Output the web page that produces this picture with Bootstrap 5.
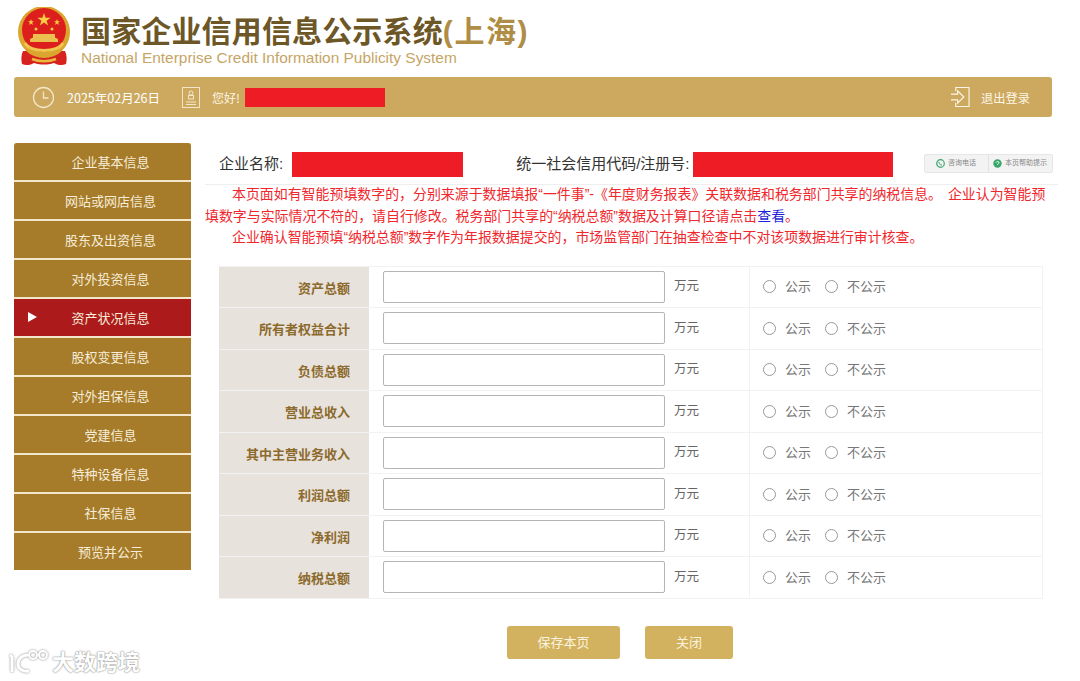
<!DOCTYPE html>
<html lang="zh">
<head>
<meta charset="utf-8">
<title>国家企业信用信息公示系统</title>
<link href="https://cdn.jsdelivr.net/npm/bootstrap@5.3.0/dist/css/bootstrap.min.css" rel="stylesheet">
<style>
html,body{height:681px;overflow:hidden;background:#fff}
body{font-family:"Liberation Sans","Noto Sans CJK SC",sans-serif;color:#444;position:relative}
.site-head{height:77px;padding:7px 0 0 17px;gap:10px}
.head-title{font-family:"Liberation Sans","Noto Sans CJK SC",sans-serif;font-size:30px;font-weight:700;line-height:32px;color:#6d5726;margin-top:9px;letter-spacing:.15px;white-space:nowrap}
.head-title span{color:#b08d46;font-weight:700;letter-spacing:1.600px}
.head-en{font-size:15.45px;line-height:16px;color:#c6a565;margin-top:2px;white-space:nowrap}
.top-bar{margin:0 28px 0 14px;height:40px;background:#cca95f;border-radius:3px;color:#fff;padding:0 22px 0 18px;font-family:"Noto Sans CJK SC",sans-serif}
.date-txt{font-size:12.5px;margin:2px 22px 0 12px}
.hello-txt{font-size:12px;margin:2px 0 0 12px;color:#fdf6e6}
.mask-a{width:140px;height:19px;background:#ee1c25;margin-left:5px}
.logout{font-size:12.25px;gap:11px;color:#fdf6e6}
.logout span{margin-top:2px}
.main-area{margin-top:26px;padding-left:14px}
.side-nav{width:177px;flex:none;gap:2px;background:#f3e7cb}
.side-item{height:37px;background:#a67c2a;color:#f6ecd8;font-family:"Noto Sans CJK SC",sans-serif;font-size:13px;line-height:37px;text-align:center;padding-left:16px;position:relative;text-decoration:none}
.side-item:first-child{border-radius:3px 3px 0 0}
.side-item.on{background:#ad1a1c}
.side-item.on::before{content:"";position:absolute;left:14px;top:13px;border-left:9px solid #fff;border-top:5px solid transparent;border-bottom:5px solid transparent}
.content-col{width:853px;margin-left:14px;font-family:"Liberation Sans","Noto Sans CJK SC",sans-serif}
.name-row{height:42px;padding:2px 5px 0 14px;border-bottom:1px solid #eee;font-size:15px;color:#333;white-space:nowrap}
.mask-b{height:25px;background:#ee1c25}
.name-mask{width:171px;margin-left:9px}
.code-lab{margin-left:53px}
.code-mask{width:200px;margin-left:3px}
.help-btns{border:1px solid #e6e6e6;background:#f3f3f3;border-radius:2px;height:19px;font-size:7px;color:#888;margin-left:31px;margin-bottom:2px}
.help-btns>div{height:17px;gap:3px}
.help-btns>div:first-child{width:64px;border-right:1px solid #e2e2e2}
.help-btns>div:last-child{width:63px}
.notice{font-size:13.93px;line-height:21.5px;color:#f0272d;margin:-1px 0 0;padding-top:0;white-space:nowrap;word-spacing:2px}
.notice p{margin:0}
.notice .lead-in{text-indent:27px}
.notice a{color:#1f1fd8;text-decoration:none}
.form-grid{margin:17px 15px 0 14px;border:1px solid #f2f2f2;border-left:0;border-bottom:0;width:824px}
.form-line{height:41.5px;border-bottom:1px solid #f2f2f2}
.form-lab{width:150px;flex:none;height:100%;background:#e8e2dc;text-align:right;padding-right:19px;font-size:13px;font-weight:700;color:#8c6a2c;line-height:43.500px}
.form-val{width:381px;flex:none;height:100%;padding-left:14px;border-right:1px solid #f2f2f2;font-size:12.5px;color:#666}
.amount{width:282px;height:32px;border:1px solid #b5b5b5;border-radius:2px;background:#fff;margin-right:9px;padding:0 6px;outline:0}
.pub-opts{padding-left:13px;font-size:13px;color:#777}
.pub-opts label{display:flex;align-items:center;gap:9px;margin-right:14px}
.pub-opts input{appearance:none;width:13px;height:13px;border:1px solid #999;border-radius:50%;background:#fff;margin:0}
.action-row{margin:27px 0 0 0;padding-left:302px;gap:25px}
.act-btn{height:33px;background:#d2b25f;border:0;border-radius:3px;color:#fbf3df;font-size:13px;padding:2px 0 0}
.act-save{width:113px}
.act-close{width:88px}
.water{position:absolute;left:9px;top:645px;gap:4px;color:#fff;font-family:"Noto Sans CJK SC",sans-serif;font-size:22px;font-weight:700;line-height:28px;text-shadow:0 0 2px #8f8f8f,0 0 1px #8f8f8f}
.water svg{filter:drop-shadow(0 0 1px #888)}
</style>
</head>
<body>
<header class="site-head d-flex">
  <svg width="54" height="60" viewBox="0 0 54 60" class="flex-shrink-0">
    <path d="M6 44c-2 4-2 9-1 13 4 2 9 1 12-1 7 2 13 2 20 0 3 2 8 3 12 1 1-4 1-9-1-13z" fill="#d7231f"/>
    <circle cx="27" cy="25" r="26" fill="#dba62e"/>
    <circle cx="27" cy="23" r="22" fill="#dc1f1c"/>
    <path d="M27 6l1.600 4.800h5l-4 3 1.500 4.800-4.100-3-4.100 3 1.500-4.800-4-3h5z" fill="#f6cf45"/>
    <path d="M14 12l.8 2.200h2.300l-1.900 1.400.7 2.300-1.900-1.400-1.900 1.400.7-2.300-1.900-1.400h2.300zM40 12l.8 2.200h2.300l-1.900 1.400.7 2.300-1.900-1.400-1.900 1.400.7-2.300-1.900-1.400h2.300z" fill="#f6cf45"/>
    <circle cx="19" cy="22" r="1.500" fill="#f6cf45"/><circle cx="35" cy="22" r="1.500" fill="#f6cf45"/>
    <path d="M13 35h28v-3l-3-1.500V27H16v3.500L13 32z" fill="#ecc04e"/>
    <path d="M8 36c5 10 33 10 38 0" stroke="#efc64f" stroke-width="3" fill="none"/>
    <path d="M15 52c7 3 17 3 24 0" stroke="#e9b93f" stroke-width="2.500" fill="none"/>
  </svg>
  <div>
    <div class="head-title">国家企业信用信息公示系统<span>(上海)</span></div>
    <div class="head-en">National Enterprise Credit Information Publicity System</div>
  </div>
</header>

<div class="top-bar d-flex align-items-center">
  <svg width="23" height="23" viewBox="0 0 23 23" fill="none" stroke="#f3e6c8" stroke-width="1.300"><circle cx="11.500" cy="11.500" r="10"/><path d="M11.500 5.500v6.500h5"/></svg>
  <span class="date-txt">2025年02月26日</span>
  <svg width="18" height="21" viewBox="0 0 18 21" fill="none" stroke="#f3e6c8" stroke-width="1"><rect x=".5" y=".5" width="17" height="20"/><circle cx="9" cy="6" r="2"/><rect x="6.500" y="8.500" width="5" height="3.500"/><path d="M4 15h10M4 17.500h10"/></svg>
  <span class="hello-txt">您好!</span>
  <span class="mask-a"></span>
  <div class="logout ms-auto d-flex align-items-center">
    <svg width="19" height="22" viewBox="0 0 20 22" fill="none" stroke="#fdf6e6" stroke-width="1.200"><path d="M5 5V1h14v20H5v-4"/><path d="M0 8h7V4.500L13.500 11 7 17.500V14H0"/></svg>
    <span>退出登录</span>
  </div>
</div>

<div class="main-area d-flex align-items-start">
  <nav class="side-nav d-flex flex-column">
    <a class="side-item" href="#">企业基本信息</a>
    <a class="side-item" href="#">网站或网店信息</a>
    <a class="side-item" href="#">股东及出资信息</a>
    <a class="side-item" href="#">对外投资信息</a>
    <a class="side-item on" href="#">资产状况信息</a>
    <a class="side-item" href="#">股权变更信息</a>
    <a class="side-item" href="#">对外担保信息</a>
    <a class="side-item" href="#">党建信息</a>
    <a class="side-item" href="#">特种设备信息</a>
    <a class="side-item" href="#">社保信息</a>
    <a class="side-item" href="#">预览并公示</a>
  </nav>
  <main class="content-col">
    <div class="name-row d-flex align-items-center">
      <span>企业名称:</span><span class="mask-b name-mask"></span>
      <span class="code-lab">统一社会信用代码/注册号:</span><span class="mask-b code-mask"></span>
      <div class="help-btns d-flex">
        <div class="d-flex align-items-center justify-content-center">
          <svg width="9" height="9" viewBox="0 0 9 9"><circle cx="4.500" cy="4.500" r="3.800" fill="none" stroke="#3aa66a" stroke-width="1.200"/><path d="M3 3c0 2 1 3 3 3" stroke="#3aa66a" fill="none"/></svg>咨询电话</div>
        <div class="d-flex align-items-center justify-content-center">
          <svg width="9" height="9" viewBox="0 0 9 9"><circle cx="4.500" cy="4.500" r="4.200" fill="#3aa66a"/><path d="M3 3.500c.5-1.300 3-1.300 3 .2 0 1-1.500 1-1.500 2" stroke="#fff" fill="none"/></svg>本页帮助提示</div>
      </div>
    </div>
    <div class="notice">
      <p class="lead-in">本页面如有智能预填数字的，分别来源于数据填报“一件事”-《年度财务报表》关联数据和税务部门共享的纳税信息。 企业认为智能预</p>
      <p>填数字与实际情况不符的，请自行修改。税务部门共享的“纳税总额”数据及计算口径请点击<a href="#">查看</a>。</p>
      <p class="lead-in">企业确认智能预填“纳税总额”数字作为年报数据提交的，市场监管部门在抽查检查中不对该项数据进行审计核查。</p>
    </div>
    <div class="form-grid">
      <div class="form-line d-flex align-items-center"><div class="form-lab">资产总额</div><div class="form-val d-flex align-items-center"><input class="amount" type="text" aria-label="资产总额"><span>万元</span></div><div class="pub-opts d-flex"><label><input type="radio" name="r1">公示</label><label><input type="radio" name="r1">不公示</label></div></div>
      <div class="form-line d-flex align-items-center"><div class="form-lab">所有者权益合计</div><div class="form-val d-flex align-items-center"><input class="amount" type="text" aria-label="所有者权益合计"><span>万元</span></div><div class="pub-opts d-flex"><label><input type="radio" name="r2">公示</label><label><input type="radio" name="r2">不公示</label></div></div>
      <div class="form-line d-flex align-items-center"><div class="form-lab">负债总额</div><div class="form-val d-flex align-items-center"><input class="amount" type="text" aria-label="负债总额"><span>万元</span></div><div class="pub-opts d-flex"><label><input type="radio" name="r3">公示</label><label><input type="radio" name="r3">不公示</label></div></div>
      <div class="form-line d-flex align-items-center"><div class="form-lab">营业总收入</div><div class="form-val d-flex align-items-center"><input class="amount" type="text" aria-label="营业总收入"><span>万元</span></div><div class="pub-opts d-flex"><label><input type="radio" name="r4">公示</label><label><input type="radio" name="r4">不公示</label></div></div>
      <div class="form-line d-flex align-items-center"><div class="form-lab">其中主营业务收入</div><div class="form-val d-flex align-items-center"><input class="amount" type="text" aria-label="其中主营业务收入"><span>万元</span></div><div class="pub-opts d-flex"><label><input type="radio" name="r5">公示</label><label><input type="radio" name="r5">不公示</label></div></div>
      <div class="form-line d-flex align-items-center"><div class="form-lab">利润总额</div><div class="form-val d-flex align-items-center"><input class="amount" type="text" aria-label="利润总额"><span>万元</span></div><div class="pub-opts d-flex"><label><input type="radio" name="r6">公示</label><label><input type="radio" name="r6">不公示</label></div></div>
      <div class="form-line d-flex align-items-center"><div class="form-lab">净利润</div><div class="form-val d-flex align-items-center"><input class="amount" type="text" aria-label="净利润"><span>万元</span></div><div class="pub-opts d-flex"><label><input type="radio" name="r7">公示</label><label><input type="radio" name="r7">不公示</label></div></div>
      <div class="form-line d-flex align-items-center"><div class="form-lab">纳税总额</div><div class="form-val d-flex align-items-center"><input class="amount" type="text" aria-label="纳税总额"><span>万元</span></div><div class="pub-opts d-flex"><label><input type="radio" name="r8">公示</label><label><input type="radio" name="r8">不公示</label></div></div>
    </div>
    <div class="action-row d-flex">
      <button type="button" class="btn act-btn act-save">保存本页</button>
      <button type="button" class="btn act-btn act-close">关闭</button>
    </div>
  </main>
</div>

<div class="water d-flex align-items-center">
  <svg width="39" height="30" viewBox="0 0 39 30" fill="none" stroke="#fff" stroke-width="3"><path d="M3 11v16M1 12l2-2"/><path d="M19 10c-6 0-10 4-10 9s5 8 11 7"/><circle cx="24" cy="10" r="4" stroke-width="2"/><circle cx="34" cy="10" r="4" stroke-width="2"/></svg>
  <span>大数跨境</span>
</div>
</body>
</html>
